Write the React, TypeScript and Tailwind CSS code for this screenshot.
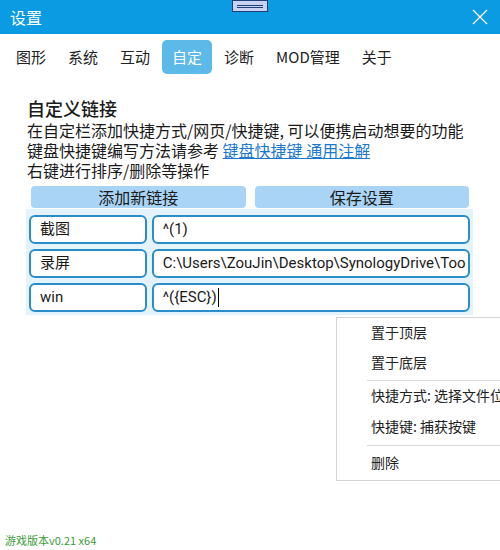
import { useState } from "react";

const tabs = ["图形", "系统", "互动", "自定", "诊断", "MOD管理", "关于"];

const links = [
  { name: "截图", value: "^(1)" },
  { name: "录屏", value: "C:\\Users\\ZouJin\\Desktop\\SynologyDrive\\Too" },
  { name: "win", value: "^({ESC})", focused: true },
];

export default function App() {
  const [active, setActive] = useState("自定");

  return (
    <div
      className="relative w-[500px] h-[550px] overflow-hidden bg-white text-[#1a1a1a]"
      style={{ fontFamily: '"Noto Sans CJK SC", "Noto Sans", sans-serif' }}
    >
      {/* Title bar */}
      <div className="relative h-[34px] bg-[#0a9be3] flex items-center justify-between pl-[10px] pr-[12px]">
        <span className="text-white text-[16px] leading-none">设置</span>
        <div className="absolute left-[232px] top-0 w-[36px] h-[12px] bg-[#c9d1f3] border border-[#1f3f78] flex flex-col items-center justify-center gap-[1px]">
          <div className="w-[26px] h-px bg-[#1f3f78]" />
          <div className="w-[26px] h-px bg-[#1f3f78]" />
        </div>
        <svg width="16" height="16" viewBox="0 0 16 16" className="mt-[-1px]">
          <path d="M1 1L15 15M15 1L1 15" stroke="white" strokeWidth="1.3" fill="none" />
        </svg>
      </div>

      {/* Tabs */}
      <div className="mt-[6px] pl-[6px] flex gap-[2px]">
        {tabs.map((t) => (
          <button
            key={t}
            onClick={() => setActive(t)}
            className={
              "h-[34px] px-[10px] rounded-[5px] text-[15px] " +
              (active === t ? "bg-[#5db9e8] text-white" : "text-[#222]")
            }
          >
            {t}
          </button>
        ))}
      </div>

      {/* Content */}
      <div className="mt-[23px] px-[27px]">
        <h1 className="text-[18px] leading-[22px] font-medium">自定义链接</h1>
        <div className="text-[16px] leading-[20px] mt-[1px]">
          <p className="whitespace-nowrap">在自定栏添加快捷方式/网页/快捷键, 可以便携启动想要的功能</p>
          <p className="whitespace-nowrap">
            键盘快捷键编写方法请参考{" "}
            <a className="text-[#1a78d0] underline">键盘快捷键 通用注解</a>
          </p>
          <p>右键进行排序/删除等操作</p>
        </div>

        <div className="mt-[6px] pl-[4px] pr-[4px] flex gap-[9px]">
          <button className="flex-1 h-[22px] rounded-[4px] bg-[#a9d4f6] text-[16px] leading-[22px]">添加新链接</button>
          <button className="flex-1 h-[22px] rounded-[4px] bg-[#a9d4f6] text-[16px] leading-[22px]">保存设置</button>
        </div>

        <div className="ml-[-1px] w-[447px] mt-[1px] bg-[#e4f2fc] px-[3px] pt-[6px] pb-[3px] flex flex-col gap-[5px]">
          {links.map((l) => (
            <div
              key={l.name}
              className="flex gap-[5px] text-[15px]"
              style={{ fontFamily: 'Roboto, "Noto Sans CJK SC", sans-serif' }}
            >
              <div className="w-[118px] h-[29px] rounded-[6px] border-2 border-[#2a8dc8] bg-white px-[9px] flex items-center">
                {l.name}
              </div>
              <div className="w-[319px] h-[29px] rounded-[6px] border-2 border-[#2a8dc8] bg-white px-[9px] flex items-center overflow-hidden whitespace-nowrap">
                {l.value}
                {l.focused && <span className="inline-block w-px h-[19px] bg-black ml-[1px]" />}
              </div>
            </div>
          ))}
        </div>
      </div>

      {/* Context menu */}
      <div className="absolute left-[336px] top-[317px] w-[164px] bg-white border border-r-0 border-[#d4d4d4] text-[14px] text-[#222]">
        <div className="h-[31px] pl-[34px] pb-[3px] flex items-center">置于顶层</div>
        <div className="h-[30px] pl-[34px] pb-[3px] flex items-center">置于底层</div>
        <div className="ml-[30px] h-px bg-[#d8d8d8] mt-px" />
        <div className="h-[32px] pl-[34px] pb-[3px] flex items-center whitespace-nowrap overflow-hidden">快捷方式: 选择文件位</div>
        <div className="h-[30px] pl-[34px] pb-[3px] flex items-center">快捷键: 捕获按键</div>
        <div className="ml-[30px] h-px bg-[#d8d8d8] my-[2px]" />
        <div className="h-[32px] pl-[34px] pb-[3px] flex items-center">删除</div>
      </div>

      {/* Version */}
      <div className="absolute left-[5px] top-[532px] text-[11px] leading-[16px] text-[#3a9b3a]">游戏版本v0.21 x64</div>
    </div>
  );
}
